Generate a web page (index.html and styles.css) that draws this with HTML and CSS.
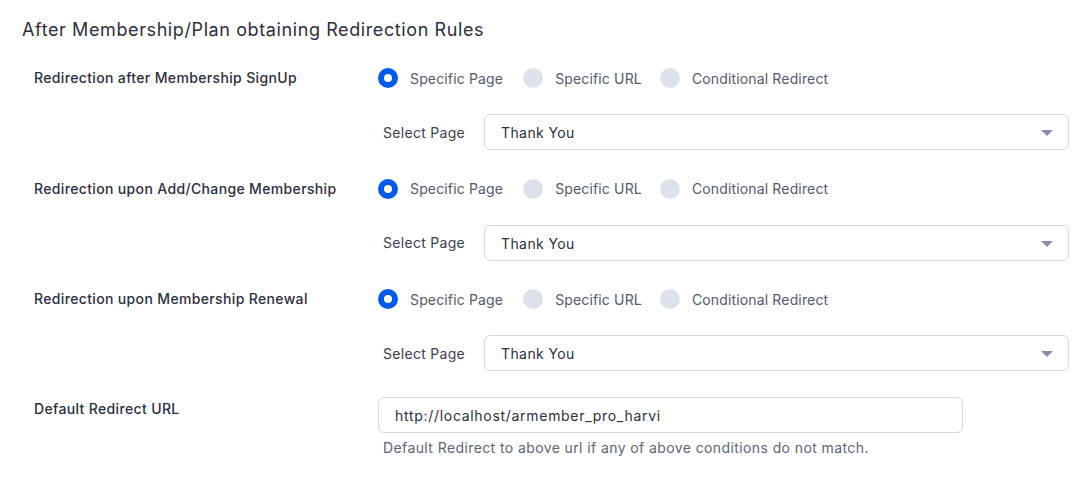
FILE: index.html
```html
<!DOCTYPE html>
<html lang="en">
<head>
    <meta charset="UTF-8">
    <title>Redirection Rules</title>
    <link rel="stylesheet" href="styles.css">
</head>
<body>
    <div class="page">
        <h2 class="pageTitle">After Membership/Plan obtaining Redirection Rules</h2>

        <div class="rule">
            <div class="ruleLabel">Redirection after Membership SignUp</div>
            <div class="ruleBody">
                <div class="radioGroup">
                    <label class="radioItem"><input type="radio" name="signup" checked> Specific Page</label>
                    <label class="radioItem"><input type="radio" name="signup"> Specific URL</label>
                    <label class="radioItem"><input type="radio" name="signup"> Conditional Redirect</label>
                </div>
                <div class="selectRow">
                    <span class="selectLabel">Select Page</span>
                    <div class="selectBox">Thank You<span class="caret"></span></div>
                </div>
            </div>
        </div>

        <div class="rule">
            <div class="ruleLabel">Redirection upon Add/Change Membership</div>
            <div class="ruleBody">
                <div class="radioGroup">
                    <label class="radioItem"><input type="radio" name="change" checked> Specific Page</label>
                    <label class="radioItem"><input type="radio" name="change"> Specific URL</label>
                    <label class="radioItem"><input type="radio" name="change"> Conditional Redirect</label>
                </div>
                <div class="selectRow">
                    <span class="selectLabel">Select Page</span>
                    <div class="selectBox">Thank You<span class="caret"></span></div>
                </div>
            </div>
        </div>

        <div class="rule lastSelectRule">
            <div class="ruleLabel">Redirection upon Membership Renewal</div>
            <div class="ruleBody">
                <div class="radioGroup">
                    <label class="radioItem"><input type="radio" name="renew" checked> Specific Page</label>
                    <label class="radioItem"><input type="radio" name="renew"> Specific URL</label>
                    <label class="radioItem"><input type="radio" name="renew"> Conditional Redirect</label>
                </div>
                <div class="selectRow">
                    <span class="selectLabel">Select Page</span>
                    <div class="selectBox">Thank You<span class="caret"></span></div>
                </div>
            </div>
        </div>

        <div class="rule defaultRule">
            <div class="ruleLabel">Default Redirect URL</div>
            <div class="ruleBody">
                <input type="text" class="urlInput" value="http://localhost/armember_pro_harvi">
                <div class="helpText">Default Redirect to above url if any of above conditions do not match.</div>
            </div>
        </div>
    </div>
</body>
</html>
```

FILE: styles.css
```css
* {box-sizing: border-box}
body {
    font-family: Inter, "Open Sans", sans-serif;
    margin: 0;
    padding: 0;
    background-color: #fff;
    color: #2c2f40;
}
.page {
    padding: 17px 0 0 22px;
}
.pageTitle {
    font-size: 18px;
    font-weight: 400;
    line-height: 26px;
    letter-spacing: 0.6px;
    margin: 0 0 25px 0;
    color: #2c2f40;
}
.rule {
    display: grid;
    grid-template-columns: 344px 1fr;
    padding-left: 12px;
    margin-bottom: 28.5px;
}
.lastSelectRule {
    margin-bottom: 26px;
}
.ruleLabel {
    font-size: 14px;
    font-weight: 500;
    line-height: 20px;
    letter-spacing: 0.35px;
}
.radioGroup {
    display: flex;
    height: 20px;
    align-items: center;
}
.radioItem {
    display: flex;
    align-items: center;
    font-size: 14px;
    letter-spacing: 0.15px;
    color: #555a6e;
    margin-right: 18px;
    cursor: pointer;
}
.radioItem:first-child {
    margin-right: 20px;
}
.radioItem input {
    appearance: none;
    width: 20px;
    height: 20px;
    margin: 0 12px 0 0;
    border-radius: 50%;
    background: #dce1ec;
    cursor: pointer;
}
.radioItem input:checked {
    background: #fff;
    border: 6px solid #005aee; /* ring */
}
.selectRow {
    display: flex;
    align-items: center;
    margin-top: 26px;
    padding-left: 5px;
}
.selectLabel {
    width: 101px;
    font-size: 14px;
    letter-spacing: 0.3px;
    color: #3c4052;
}
.selectBox {
    position: relative;
    width: 585px;
    height: 36px;
    border: 1px solid #d3d8e3;
    border-radius: 6px;
    padding: 1px 16px 0;
    line-height: 34px;
    font-size: 14px;
    letter-spacing: 0.4px;
    color: #2c2f40;
}
.caret {
    position: absolute;
    right: 15px;
    top: 15px;
    border-left: 6px solid transparent;
    border-right: 6px solid transparent;
    border-top: 6px solid #8a8cab;
}
.defaultRule .ruleLabel {
    padding-top: 2px;
}
.urlInput {
    display: block;
    width: 585px;
    height: 36px;
    border: 1px solid #d3d8e3;
    border-radius: 6px;
    padding: 0 16px;
    font-family: inherit;
    font-size: 14px;
    letter-spacing: 0.7px;
    color: #2c2f40;
}
.helpText {
    margin-top: 5px;
    padding-left: 5px;
    font-size: 14px;
    line-height: 20px;
    letter-spacing: 0.4px;
    color: #5f6376;
}
```
